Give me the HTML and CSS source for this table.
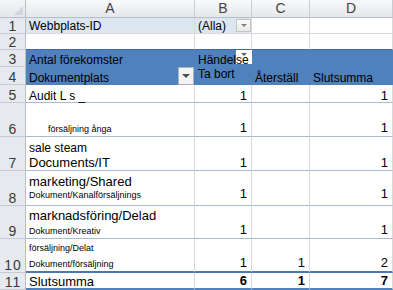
FILE: index.html
```html
<!DOCTYPE html>
<html lang="sv">
<head>
<meta charset="utf-8">
<title>Pivottabell</title>
<link rel="stylesheet" href="styles.css">
</head>
<body>
<div class="sheet">
  <div class="corner"><span class="corner-tri"></span></div>
  <div class="ch">A</div>
  <div class="ch">B</div>
  <div class="ch">C</div>
  <div class="ch">D</div>

  <div class="rh">1</div>
  <div class="c lb">Webbplats-ID</div>
  <div class="c lb filter"><span>(Alla)</span><span class="dd dd-page"></span></div>
  <div class="c"></div>
  <div class="c"></div>

  <div class="rh">2</div>
  <div class="c top-blue"></div>
  <div class="c top-blue"></div>
  <div class="c top-blue"></div>
  <div class="c top-blue"></div>

  <div class="rh">3</div>
  <div class="c hd">Antal förekomster</div>
  <div class="c hd"><span class="dd dd-col"></span><span class="over">Händelse</span></div>
  <div class="c hd"></div>
  <div class="c hd"></div>

  <div class="rh">4</div>
  <div class="c hd rowfield"><span>Dokumentplats</span><span class="dd dd-row"></span></div>
  <div class="c hd pb4">Ta bort</div>
  <div class="c hd">Återställ</div>
  <div class="c hd">Slutsumma</div>

  <div class="rh">5</div>
  <div class="c d r5"><div class="t12">Audit L s _</div></div>
  <div class="c d num r5">1</div>
  <div class="c d num r5"></div>
  <div class="c d num r5">1</div>

  <div class="rh">6</div>
  <div class="c d pb1"><div class="t9 indent">försäljning ånga</div></div>
  <div class="c d num pb1">1</div>
  <div class="c d num pb1"></div>
  <div class="c d num pb1">1</div>

  <div class="rh">7</div>
  <div class="c d"><div class="t12">sale steam</div><div class="t13">Documents/IT</div></div>
  <div class="c d num">1</div>
  <div class="c d num"></div>
  <div class="c d num">1</div>

  <div class="rh">8</div>
  <div class="c d pb4"><div class="t13">marketing/Shared</div><div class="t9">Dokument/Kanalförsäljnings</div></div>
  <div class="c d num pb4">1</div>
  <div class="c d num pb4"></div>
  <div class="c d num pb4">1</div>

  <div class="rh">9</div>
  <div class="c d pb1"><div class="t13">marknadsföring/Delad</div><div class="t9 gap2">Dokument/Kreativ</div></div>
  <div class="c d num pb1">1</div>
  <div class="c d num pb1"></div>
  <div class="c d num pb1">1</div>

  <div class="rh">10</div>
  <div class="c d last pb1"><div class="t9">försäljning/Delat</div><div class="t9 gap4">Dokument/försäljning</div></div>
  <div class="c d last num pb1">1</div>
  <div class="c d last num pb1">1</div>
  <div class="c d last num pb1">2</div>

  <div class="rh">11</div>
  <div class="c d total"><div class="t13 tight">Slutsumma</div></div>
  <div class="c d total num bold">6</div>
  <div class="c d total num bold">1</div>
  <div class="c d total num bold">7</div>
</div>
</body>
</html>
```

FILE: styles.css
```css
html, body {
  margin: 0;
  padding: 0;
  background: #ffffff;
}
body {
  width: 393px;
  height: 290px;
  overflow: hidden;
  font-family: "Liberation Sans", Arial, sans-serif;
  color: #000;
}
.sheet {
  display: grid;
  grid-template-columns: 26px 169px 57px 58px 83px;
  grid-template-rows: 18px 16px 16px 17px 18px 18px 34px 34px 35px 33px 34px 17px;
}

/* corner + headers */
.corner {
  box-sizing: border-box;
  background: linear-gradient(#f4f5f7, #e3e6ea);
  border-right: 1px solid #b8bec6;
  border-bottom: 1px solid #b8bec6;
  display: flex;
  justify-content: flex-end;
  align-items: flex-end;
  padding: 0 2px 2px 0;
}
.corner-tri {
  width: 0;
  height: 0;
  border-left: 9px solid transparent;
  border-bottom: 9px solid #d2d6db;
}
.ch {
  box-sizing: border-box;
  background: linear-gradient(#f8f9fa, #e4e7eb);
  border-right: 1px solid #c9cdd3;
  border-bottom: 1px solid #b8bec6;
  text-align: center;
  font-size: 14px;
  line-height: 17px;
  color: #444;
}
.rh {
  box-sizing: border-box;
  background: #e6e9ed;
  border-right: 1px solid #b8bec6;
  border-bottom: 1px solid #c8ccd2;
  display: flex;
  align-items: flex-end;
  justify-content: center;
  font-size: 14px;
  line-height: 14px;
  color: #3a3a3a;
  letter-spacing: 1px;
  padding-left: 1px;
}

/* cells */
.c {
  box-sizing: border-box;
  border-right: 1px solid #d9d9d9;
  border-bottom: 1px solid #d9d9d9;
  display: flex;
  flex-direction: column;
  justify-content: flex-end;
  padding: 0 3px;
  font-size: 12px;
  line-height: 13px;
  white-space: nowrap;
  position: relative;
  min-width: 0;
}
.lb {
  background: #dce6f1;
}
.filter {
  flex-direction: row;
  align-items: flex-end;
  padding-right: 0;
}
.top-blue {
  border-bottom-color: #3d6aa6;
}
.hd {
  background: #4f81bd;
  border-right: none;
  border-bottom: none;
}
.rowfield {
  flex-direction: row;
  align-items: flex-end;
  padding-right: 1px;
}
.over {
  position: relative;
  z-index: 1;
}

/* dropdown buttons */
.dd {
  box-sizing: border-box;
  display: flex;
  align-items: center;
  justify-content: center;
}
.dd::after {
  content: "";
  width: 0;
  height: 0;
  border-left: 3px solid transparent;
  border-right: 3px solid transparent;
  border-top: 3px solid #7f7f7f;
}
.dd-page {
  margin-left: auto;
  margin-bottom: 1px;
  width: 15px;
  height: 13px;
  background: linear-gradient(#fbfbfb, #e9e9e9);
  border: 1px solid #c4c4c4;
}
.dd-row {
  margin-left: auto;
  width: 16px;
  height: 18px;
  background: #f3f3f3;
  border: 1px solid #a9b3bf;
}
.dd-row::after {
  border-left-width: 4px;
  border-right-width: 4px;
  border-top: 4px solid #505050;
}
.dd-col {
  position: absolute;
  right: 0;
  top: 0;
  width: 16px;
  height: 14px;
  background: #ffffff;
  align-items: flex-start;
  padding-top: 3px;
}
.dd-col::after {
  border-top-color: #606060;
}

/* data rows */
.d {
  border-bottom-color: #a9bbd0;
}
.last {
  border-bottom: 2px solid #4a78b4;
}
.total {
  border-bottom: 2px solid #4f81bd;
}
.num {
  align-items: flex-end;
  padding-right: 4px;
  font-size: 13px;
  line-height: 14px;
}
.bold {
  font-weight: bold;
}
.r5.num {
  line-height: 13px;
}
.pb1 { padding-bottom: 1px; }
.pb4 { padding-bottom: 4px; }

.t9 {
  font-size: 9px;
  line-height: 12px;
}
.t12 {
  font-size: 12px;
  line-height: 13px;
}
.r5 .t12 {
  line-height: 12px;
}
.t13 {
  font-size: 13px;
  line-height: 15px;
}
.t13.tight {
  line-height: 12px;
}
.pb4 .t13 {
  line-height: 14px;
}
.indent {
  padding-left: 19px;
}
.gap2 { margin-top: 2px; }
.gap4 { margin-top: 4px; }
```
